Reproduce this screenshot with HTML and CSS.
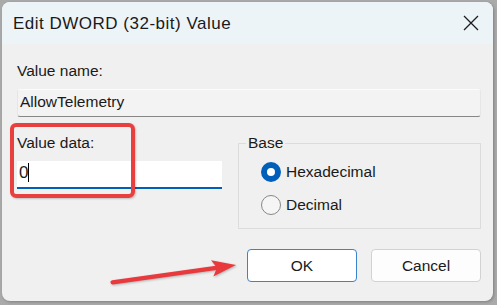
FILE: index.html
```html
<!DOCTYPE html>
<html lang="en">
<head>
    <meta charset="UTF-8">
    <title>Edit DWORD (32-bit) Value</title>
    <link rel="stylesheet" href="styles.css">
</head>
<body>
    <div class="window">
        <div class="titlebar">
            <span class="title">Edit DWORD (32-bit) Value</span>
            <svg class="close" width="16" height="16" viewBox="0 0 16 16">
                <path d="M1 1 L15 15 M15 1 L1 15" stroke="#1c1c1c" stroke-width="1.25" fill="none"/>
            </svg>
        </div>
        <div class="content">
            <div class="label">Value name:</div>
            <div class="field readonly">AllowTelemetry</div>
            <div class="row">
                <div class="data-col">
                    <div class="label">Value data:</div>
                    <div class="field edit"><span>0</span><span class="caret"></span></div>
                </div>
                <fieldset class="base">
                    <legend>Base</legend>
                    <div class="radios">
                        <label class="radio"><span class="dot checked"></span>Hexadecimal</label>
                        <label class="radio"><span class="dot"></span>Decimal</label>
                    </div>
                </fieldset>
            </div>
            <div class="buttons">
                <button class="btn default">OK</button>
                <button class="btn">Cancel</button>
            </div>
        </div>

        <!-- annotations drawn over the dialog -->
        <div class="highlight"></div>
        <svg class="arrow" width="140" height="45" viewBox="0 0 140 45">
            <line x1="7.5" y1="32.3" x2="113" y2="17.6" stroke="#e8393c" stroke-width="4.2" stroke-linecap="round"/>
            <polygon points="131,15 106,10.3 112,17.8 108.3,26.4" fill="#e8393c"/>
        </svg>
    </div>
</body>
</html>
```

FILE: styles.css
```css
body {
    margin: 0;
    width: 497px;
    height: 305px;
    overflow: hidden;
    background-color: #aaaaaa;
    font-family: "Liberation Sans", Arial, sans-serif;
    color: #1a1a1a;
}
.window {
    position: relative;
    margin: 2px 0 0 2px;
    width: 491px;
    height: 299px;
    background-color: #f0f0f0;
    border-radius: 8px;
    overflow: hidden;
    box-shadow: 1px 1px 3px rgba(0, 0, 0, 0.25);
}
.titlebar {
    height: 42px;
    display: flex;
    align-items: center;
    justify-content: space-between;
    padding: 0 14px 0 11px;
    background-color: #edf4f8;
}
.title {
    font-size: 17px;
    line-height: 20px;
    letter-spacing: 0.5px;
    margin-top: 2px;
}
.close {
    display: block;
    margin-top: -1px;
}
.content {
    padding: 17px 12px 19px 15px;
    font-size: 15.5px;
}
.label {
    line-height: 20px;
}
.field {
    box-sizing: border-box;
    height: 28px;
    margin-top: 8px;
    line-height: 20px;
}
.readonly {
    padding: 2px 2px 0;
    background-color: #f3f3f3;
    border: 1px solid #e6e6e6;
    border-top-color: #fbfbfb;
    border-bottom-color: #868686;
    border-radius: 3px;
}
.edit {
    display: flex;
    align-items: flex-start;
    padding: 2px 2px 0;
    font-size: 17px;
    background-color: #fff;
    border-bottom: 2px solid #005fb8;
}
.caret {
    display: inline-block;
    width: 1px;
    height: 19px;
    background-color: #000;
}
.row {
    display: flex;
    gap: 16px;
    margin-top: 16px;
}
.data-col {
    width: 205px;
}
.base {
    flex: 1;
    margin: 0;
    padding: 0;
    border: 1px solid #dcdcdc;
}
.base legend {
    margin-left: 7px;
    padding: 0 2px;
    line-height: 20px;
}
.radios {
    display: flex;
    flex-direction: column;
    gap: 13px;
    padding: 9px 0 13px 22px;
}
.radio {
    display: flex;
    align-items: center;
    gap: 5px;
    line-height: 20px;
}
.dot {
    box-sizing: border-box;
    width: 20px;
    height: 20px;
    border-radius: 50%;
    border: 1px solid #878787;
    background-color: #f5f5f5;
}
.dot.checked {
    border: 6.5px solid #005fb8;
    background-color: #fff;
}
.buttons {
    display: flex;
    justify-content: flex-end;
    gap: 14px;
    margin-top: 20px;
}
.btn {
    box-sizing: border-box;
    width: 110px;
    height: 33px;
    font-family: inherit;
    font-size: 15.5px;
    color: #1a1a1a;
    background-color: #fdfdfd;
    border: 1px solid #d2d2d2;
    border-radius: 4px;
}
.btn.default {
    background-color: #fff;
    border-color: #3b83cc;
}
.highlight {
    position: absolute;
    left: 8px;
    top: 121px;
    width: 125px;
    height: 75px;
    box-sizing: border-box;
    border: 4px solid #e8403f;
    border-radius: 6px;
    box-shadow: 1px 1px 2px rgba(0, 0, 0, 0.2);
}
.arrow {
    position: absolute;
    left: 103px;
    top: 248px;
    filter: drop-shadow(1px 1px 1px rgba(0, 0, 0, 0.25));
}
```
